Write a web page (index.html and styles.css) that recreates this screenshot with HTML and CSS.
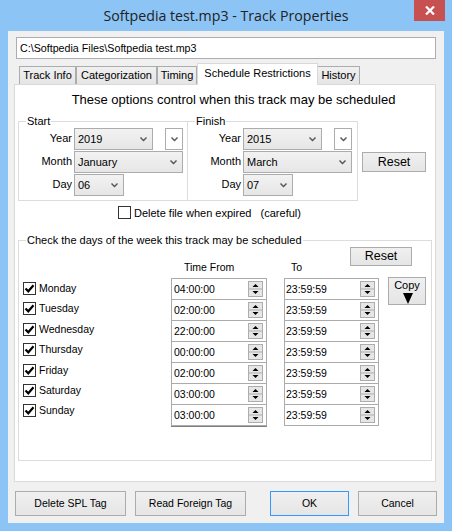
FILE: index.html
```html
<!DOCTYPE html>
<html>
<head>
<meta charset="utf-8">
<link rel="stylesheet" href="styles.css">
</head>
<body>
<svg class="defs" width="0" height="0">
  <defs>
    <symbol id="spin" viewBox="0 0 15 16">
      <rect x="0.5" y="0.5" width="14" height="15" fill="#E6E6E6" stroke="#ADADAD"/>
      <line x1="1" y1="8" x2="14" y2="8" stroke="#ADADAD"/>
      <path d="M7.5 3 L10.5 6 L4.5 6 Z" fill="#000"/>
      <path d="M4.5 10 L10.5 10 L7.5 13 Z" fill="#000"/>
    </symbol>
    <symbol id="arrow" viewBox="0 0 7 5">
      <path d="M0 1 L1 0 L3.5 2.5 L6 0 L7 1 L3.5 4.5 Z" fill="#555"/>
    </symbol>
    <symbol id="check" viewBox="0 0 11 11">
      <path d="M1.5 5.5 L4.3 8.3 L9.5 2.2" fill="none" stroke="#000" stroke-width="2.2"/>
    </symbol>
  </defs>
</svg>
<div class="window">
  <div class="titlebar">
    <div class="title">Softpedia test.mp3 - Track Properties</div>
    <div class="close">
      <svg width="10" height="9" viewBox="0 0 10 9"><path d="M1 0.5 L9 8.5 M9 0.5 L1 8.5" stroke="#fff" stroke-width="2.2"/></svg>
    </div>
  </div>
  <div class="client">
    <div class="path">C:\Softpedia Files\Softpedia test.mp3</div>
    <div class="tabs">
      <div class="tab tab-info">Track Info</div>
      <div class="tab tab-cat">Categorization</div>
      <div class="tab tab-timing">Timing</div>
      <div class="tab tab-sel">Schedule Restrictions</div>
      <div class="tab tab-hist">History</div>
    </div>
    <div class="panel">
      <div class="panel-title">These options control when this track may be scheduled</div>
      <div class="dates">
        <fieldset class="group range">
          <legend>Start</legend>
          <div class="frow">
            <span class="flabel">Year</span>
            <div class="combo c-year">2019<svg class="arr"><use href="#arrow"/></svg></div>
            <div class="combo c-small"><svg class="arr"><use href="#arrow"/></svg></div>
          </div>
          <div class="frow">
            <span class="flabel">Month</span>
            <div class="combo c-month">January<svg class="arr"><use href="#arrow"/></svg></div>
          </div>
          <div class="frow">
            <span class="flabel">Day</span>
            <div class="combo c-day">06<svg class="arr"><use href="#arrow"/></svg></div>
          </div>
        </fieldset>
        <fieldset class="group range finish">
          <legend>Finish</legend>
          <div class="frow">
            <span class="flabel">Year</span>
            <div class="combo c-year">2015<svg class="arr"><use href="#arrow"/></svg></div>
            <div class="combo c-small"><svg class="arr"><use href="#arrow"/></svg></div>
          </div>
          <div class="frow">
            <span class="flabel">Month</span>
            <div class="combo c-month">March<svg class="arr"><use href="#arrow"/></svg></div>
          </div>
          <div class="frow">
            <span class="flabel">Day</span>
            <div class="combo c-day">07<svg class="arr"><use href="#arrow"/></svg></div>
          </div>
        </fieldset>
        <div class="btn reset reset-dates">Reset</div>
      </div>
      <div class="expire">
        <span class="cb"></span>
        <span class="expire-text">Delete file when expired&nbsp;&nbsp; (careful)</span>
      </div>
      <fieldset class="group days">
        <legend>Check the days of the week this track may be scheduled</legend>
        <div class="reset-row"><div class="btn reset reset-days">Reset</div></div>
        <div class="col-heads"><span class="h-from">Time From</span><span class="h-to">To</span></div>
        <div class="rows">
          <div class="checks">
            <div class="day"><span class="cb"><svg><use href="#check"/></svg></span>Monday</div>
            <div class="day"><span class="cb"><svg><use href="#check"/></svg></span>Tuesday</div>
            <div class="day"><span class="cb"><svg><use href="#check"/></svg></span>Wednesday</div>
            <div class="day"><span class="cb"><svg><use href="#check"/></svg></span>Thursday</div>
            <div class="day"><span class="cb"><svg><use href="#check"/></svg></span>Friday</div>
            <div class="day"><span class="cb"><svg><use href="#check"/></svg></span>Saturday</div>
            <div class="day"><span class="cb"><svg><use href="#check"/></svg></span>Sunday</div>
          </div>
          <div class="spins from">
            <div class="spin"><span class="val">04:00:00</span><svg class="sb"><use href="#spin"/></svg></div>
            <div class="spin"><span class="val">02:00:00</span><svg class="sb"><use href="#spin"/></svg></div>
            <div class="spin"><span class="val">22:00:00</span><svg class="sb"><use href="#spin"/></svg></div>
            <div class="spin"><span class="val">00:00:00</span><svg class="sb"><use href="#spin"/></svg></div>
            <div class="spin"><span class="val">02:00:00</span><svg class="sb"><use href="#spin"/></svg></div>
            <div class="spin"><span class="val">03:00:00</span><svg class="sb"><use href="#spin"/></svg></div>
            <div class="spin"><span class="val">03:00:00</span><svg class="sb"><use href="#spin"/></svg></div>
          </div>
          <div class="spins to">
            <div class="spin"><span class="val">23:59:59</span><svg class="sb"><use href="#spin"/></svg></div>
            <div class="spin"><span class="val">23:59:59</span><svg class="sb"><use href="#spin"/></svg></div>
            <div class="spin"><span class="val">23:59:59</span><svg class="sb"><use href="#spin"/></svg></div>
            <div class="spin"><span class="val">23:59:59</span><svg class="sb"><use href="#spin"/></svg></div>
            <div class="spin"><span class="val">23:59:59</span><svg class="sb"><use href="#spin"/></svg></div>
            <div class="spin"><span class="val">23:59:59</span><svg class="sb"><use href="#spin"/></svg></div>
            <div class="spin"><span class="val">23:59:59</span><svg class="sb"><use href="#spin"/></svg></div>
          </div>
          <div class="btn copy">
            <span>Copy</span>
            <svg width="10" height="11" viewBox="0 0 10 11"><path d="M0 0 L10 0 L5 11 Z" fill="#000"/></svg>
          </div>
        </div>
      </fieldset>
    </div>
    <div class="buttons">
      <div class="btn b-wide">Delete SPL Tag</div>
      <div class="btn b-wide b-read">Read Foreign Tag</div>
      <div class="btn b-narrow b-ok">OK</div>
      <div class="btn b-narrow b-cancel">Cancel</div>
    </div>
  </div>
</div>
</body>
</html>
```
FILE: styles.css
```css
* { box-sizing: border-box; }
body {
  margin: 0;
  background: #8CC4F6;
  font-family: "Liberation Sans", Arial, sans-serif;
  font-size: 11px;
  color: #000;
}
.defs { display: block; width: 0; height: 0; overflow: hidden; }
.window { width: 452px; height: 531px; display: flex; flex-direction: column; }

.titlebar {
  height: 31px;
  flex-shrink: 0;
  display: grid;
  grid-template-columns: 1fr auto 1fr;
}
.title {
  grid-column: 2;
  font-family: "Open Sans", "Noto Sans", sans-serif;
  font-size: 14.2px;
  line-height: 32px;
  color: #222;
  white-space: nowrap;
}
.close {
  grid-column: 3;
  justify-self: end;
  align-self: start;
  margin-right: 7px;
  width: 31px;
  height: 21px;
  background: #C75050;
  display: flex;
  align-items: center;
  justify-content: center;
}

.client {
  margin: 0 8px;
  height: 492px;
  background: #F0F0F0;
  display: flex;
  flex-direction: column;
}
.client > * { flex-shrink: 0; }

.path {
  margin: 6px 0 0 8px;
  width: 420px;
  height: 22px;
  border: 1px solid #ABADB3;
  background: #fff;
  padding-left: 3px;
  line-height: 20px;
  font-size: 10.7px;
}

.tabs {
  margin-top: 4px;
  height: 21px;
  padding-left: 11px;
  display: flex;
  align-items: flex-end;
}
.tab {
  height: 18px;
  border: 1px solid #ACACAC;
  border-bottom: none;
  background: linear-gradient(#F0F0F0, #E5E5E5);
  text-align: center;
  line-height: 17px;
  font-size: 11px;
  white-space: nowrap;
}
.tab-info { width: 57px; }
.tab-cat { width: 81px; margin-left: 0; }
.tab-timing { width: 40px; margin-left: 0; }
.tab-sel {
  width: 121px;
  height: 22px;
  margin-bottom: -1px;
  background: #fff;
  border-color: #D9D9D9;
  line-height: 19px;
  position: relative;
  z-index: 2;
}
.tab-hist { width: 43px; margin-left: -1px; }

.panel {
  margin-left: 6px;
  width: 422px;
  height: 398px;
  border: 1px solid #D9D9D9;
  background: #fff;
  overflow: hidden;
}
.panel-title {
  height: 30px;
  line-height: 30px;
  font-size: 13px;
  text-align: center;
  padding-left: 17px;
  white-space: nowrap;
}

.dates { display: flex; align-items: flex-start; }
.group {
  margin: 0;
  padding: 0;
  border: 1px solid #DCDCDC;
  min-width: 0;
}
.group legend {
  margin-left: 7px;
  padding: 0 1px;
  line-height: 12px;
  font-size: 11px;
}
.range {
  margin-left: 3px;
  width: 170px;
  padding-bottom: 4px;
}
.range.finish { margin-left: -1px; width: 171px; }
.frow {
  display: flex;
  align-items: center;
  height: 22px;
  margin-top: 1px;
}
.flabel {
  width: 53px;
  text-align: right;
  margin-right: 2px;
  font-size: 11px;
  margin-top: -2px;
}
.combo {
  height: 22px;
  border: 1px solid #ACACAC;
  background: linear-gradient(#F2F2F2, #E6E6E6);
  display: flex;
  align-items: center;
  padding-left: 3px;
  font-size: 11px;
}
.combo .arr { width: 7px; height: 5px; margin-left: auto; margin-right: 5px; }
.c-year { width: 79px; }
.c-small { width: 18px; margin-left: 12px; background: #fff; padding-left: 0; }
.c-small .arr { margin: 0 auto; }
.c-month { width: 109px; }
.c-day { width: 50px; }

.btn {
  border: 1px solid #ACACAC;
  background: linear-gradient(#F0F0F0, #E5E5E5);
  text-align: center;
  font-size: 10.5px;
  white-space: nowrap;
}
.reset { font-size: 12.5px; }
.reset-dates {
  width: 64px;
  height: 20px;
  line-height: 18px;
  margin: 37px 0 0 4px;
}

.expire {
  margin-top: 4px;
  height: 15px;
  padding-left: 103px;
  display: flex;
  align-items: center;
}
.cb {
  width: 13px;
  height: 13px;
  border: 1px solid #333;
  background: #fff;
  display: flex;
  align-items: center;
  justify-content: center;
  flex-shrink: 0;
}
.cb svg { width: 11px; height: 11px; }
.expire-text { margin-left: 3px; font-size: 11px; }

.days {
  margin: 14px 0 0 3px;
  width: 414px;
  padding-bottom: 33px;
}
.reset-row {
  padding-top: 1px;
  display: flex;
  justify-content: flex-end;
  padding-right: 19px;
}
.reset-days { width: 62px; height: 19px; line-height: 17px; }
.col-heads {
  margin-top: -5px;
  height: 12px;
  line-height: 12px;
  display: flex;
  font-size: 10.5px;
}
.h-from { width: 272px; padding-left: 165px; }
.rows {
  margin-top: 5px;
  display: flex;
  align-items: flex-start;
}
.checks { width: 152px; padding-left: 4px; }
.day {
  height: 20.4px;
  padding-top: 4px;
  display: flex;
  align-items: flex-start;
  line-height: 13px;
  font-size: 10.5px;
}
.day .cb { margin-right: 3px; }
.spins { display: flex; flex-direction: column; }
.spins.from { width: 96px; border-bottom: 1px solid #808080; }
.spins.to { width: 95px; margin-left: 17px; }
.spin {
  height: 22px;
  border: 1px solid #ABABAB;
  background: #fff;
  display: flex;
  align-items: center;
  font-size: 10.5px;
}
.spin + .spin { margin-top: -1px; }
.from .spin { padding-left: 2px; }
.to .spin { padding-left: 1px; }
.sb { width: 15px; height: 16px; margin-left: auto; margin-right: 3px; }
.copy {
  margin: -1px 0 0 9px;
  width: 38px;
  height: 28px;
  display: flex;
  flex-direction: column;
  align-items: center;
  line-height: 12px;
  padding-top: 1px;
  font-size: 11px;
}
.copy svg { margin-top: 2px; margin-left: 1px; }

.buttons {
  margin-top: 9px;
  padding-left: 7px;
  display: flex;
}
.buttons .btn { height: 25px; line-height: 23px; }
.b-wide { width: 111px; }
.b-read { margin-left: 9px; }
.b-narrow { width: 79px; }
.b-ok { margin-left: 24px; border-color: #3399FF; }
.b-cancel { margin-left: 9px; }
```
